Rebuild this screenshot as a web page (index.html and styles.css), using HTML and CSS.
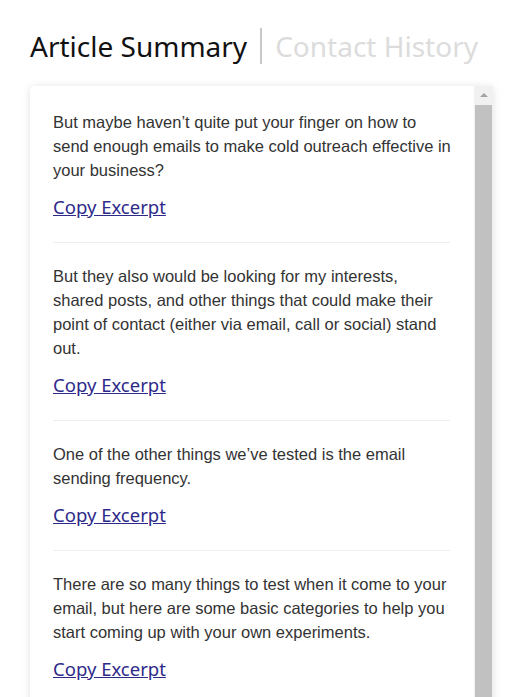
FILE: index.html
```html
<html>
<head>
<link rel="stylesheet" href="styles.css">
<title>Article Summary</title>
</head>
<body>
<div class="tabs">
  <span class="tab active">Article Summary</span>
  <span class="tab-sep"></span>
  <span class="tab">Contact History</span>
</div>

<div class="panel">
  <div class="excerpts">
    <div class="excerpt">
      <p>But maybe haven’t quite put your finger on how to send enough emails to make cold outreach effective in your business?</p>
      <a href="#">Copy Excerpt</a>
    </div>
    <div class="excerpt">
      <p>But they also would be looking for my interests, shared posts, and other things that could make their point of contact (either via email, call or social) stand out.</p>
      <a href="#">Copy Excerpt</a>
    </div>
    <div class="excerpt">
      <p>One of the other things we’ve tested is the email sending frequency.</p>
      <a href="#">Copy Excerpt</a>
    </div>
    <div class="excerpt">
      <p>There are so many things to test when it come to your email, but here are some basic categories to help you start coming up with your own experiments.</p>
      <a href="#">Copy Excerpt</a>
    </div>
  </div>
  <div class="scrollbar">
    <div class="scroll-up"></div>
    <div class="scroll-thumb"></div>
  </div>
</div>
</body>
</html>
```

FILE: styles.css
```css
body {
  margin: 0;
  padding: 28px 36px 0 30px;
  background: #fff;
  overflow: hidden;
}

/* Tab headings */
.tabs {
  display: flex;
  align-items: center;
  font-family: "Noto Sans", sans-serif;
  font-size: 28px;
  height: 36px;
  margin-bottom: 22px;
}

.tab {
  color: #dcdcdc;
}

.tab.active {
  color: #111;
}

.tab-sep {
  width: 2px;
  height: 36px;
  background: #c8c8c8;
  margin: 0 13px 0 13px;
}

/* Card with excerpts */
.panel {
  display: flex;
  background: #fff;
  border-radius: 4px;
  box-shadow: 0 1px 8px rgba(0, 0, 0, 0.12);
  height: 640px;
}

.excerpts {
  flex: 1;
  padding: 3px 24px 0 23px;
  font-family: "Liberation Sans", sans-serif;
  font-size: 16.5px;
  color: #333;
}

.excerpt {
  padding: 21px 0 23px;
  border-bottom: 1px solid #eee;
}

.excerpt p {
  margin: 0 -2px 12px 0;
  line-height: 24px;
}

.excerpt a {
  display: inline-block;
  font-family: "Noto Sans", sans-serif;
  font-size: 18.5px;
  color: #2e2a8a;
  line-height: 25px;
}

.scrollbar {
  width: 19px;
  background: #f1f1f1;
  display: flex;
  flex-direction: column;
  align-items: center;
}

.scroll-up {
  width: 0;
  height: 0;
  border-left: 4px solid transparent;
  border-right: 4px solid transparent;
  border-bottom: 4px solid #a3a3a3;
  margin: 7px 0 8px;
}

.scroll-thumb {
  width: 17px;
  flex: 1;
  background: #c1c1c1;
}
```
